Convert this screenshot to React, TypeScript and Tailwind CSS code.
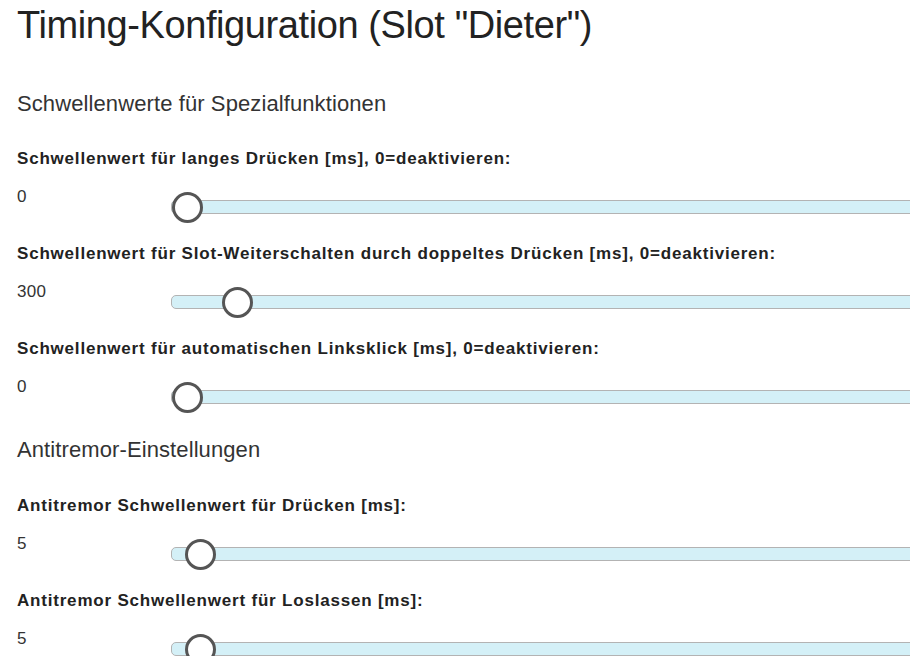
const sections = [
  {
    title: 'Schwellenwerte für Spezialfunktionen',
    items: [
      { label: 'Schwellenwert für langes Drücken [ms], 0=deaktivieren:', value: '0', thumb: 1 },
      { label: 'Schwellenwert für Slot-Weiterschalten durch doppeltes Drücken [ms], 0=deaktivieren:', value: '300', thumb: 51 },
      { label: 'Schwellenwert für automatischen Linksklick [ms], 0=deaktivieren:', value: '0', thumb: 1 },
    ],
  },
  {
    title: 'Antitremor-Einstellungen',
    items: [
      { label: 'Antitremor Schwellenwert für Drücken [ms]:', value: '5', thumb: 14 },
      { label: 'Antitremor Schwellenwert für Loslassen [ms]:', value: '5', thumb: 14 },
    ],
  },
];

function Slider({ thumb }: { thumb: number }) {
  return (
    <div className="relative h-[31px] w-[780px] shrink-0">
      <div className="absolute left-0 right-0 top-[8px] h-[14px] rounded-l-[5px] border border-[#b3b3b3] bg-[#d4f0f7]" />
      <div
        className="absolute top-0 h-[31px] w-[31px] rounded-full border-[3px] border-[#555] bg-white"
        style={{ left: thumb }}
      />
    </div>
  );
}

export default function App() {
  return (
    <div className="h-[656px] w-[910px] overflow-hidden bg-white px-[17px] font-['Liberation_Sans',Arial,sans-serif] text-[#333]">
      <h1 className="mt-[3px] whitespace-nowrap text-[38px] leading-[44px] tracking-[-0.4px] text-[#222]">
        Timing-Konfiguration (Slot "Dieter")
      </h1>
      {sections.map((s, si) => (
        <div key={s.title}>
          <h3 className={`${si === 0 ? 'mt-[44px]' : 'mt-[24px]'} text-[22px] leading-[26px] tracking-[0.1px] text-[#333]`}>
            {s.title}
          </h3>
          {s.items.map((it, i) => (
            <div key={it.label} className={i === 0 ? (si === 0 ? 'mt-[32px]' : 'mt-[33px]') : 'mt-[21px]'}>
              <p className="whitespace-nowrap text-[17px] font-bold leading-[20px] tracking-[0.8px] text-[#222]">
                {it.label}
              </p>
              <div className="mt-[18px] flex items-start">
                <span className="w-[154px] shrink-0 text-[17px] leading-[20px] tracking-[0.3px]">{it.value}</span>
                <div className="pt-[5px]">
                  <Slider thumb={it.thumb} />
                </div>
              </div>
            </div>
          ))}
        </div>
      ))}
    </div>
  );
}
